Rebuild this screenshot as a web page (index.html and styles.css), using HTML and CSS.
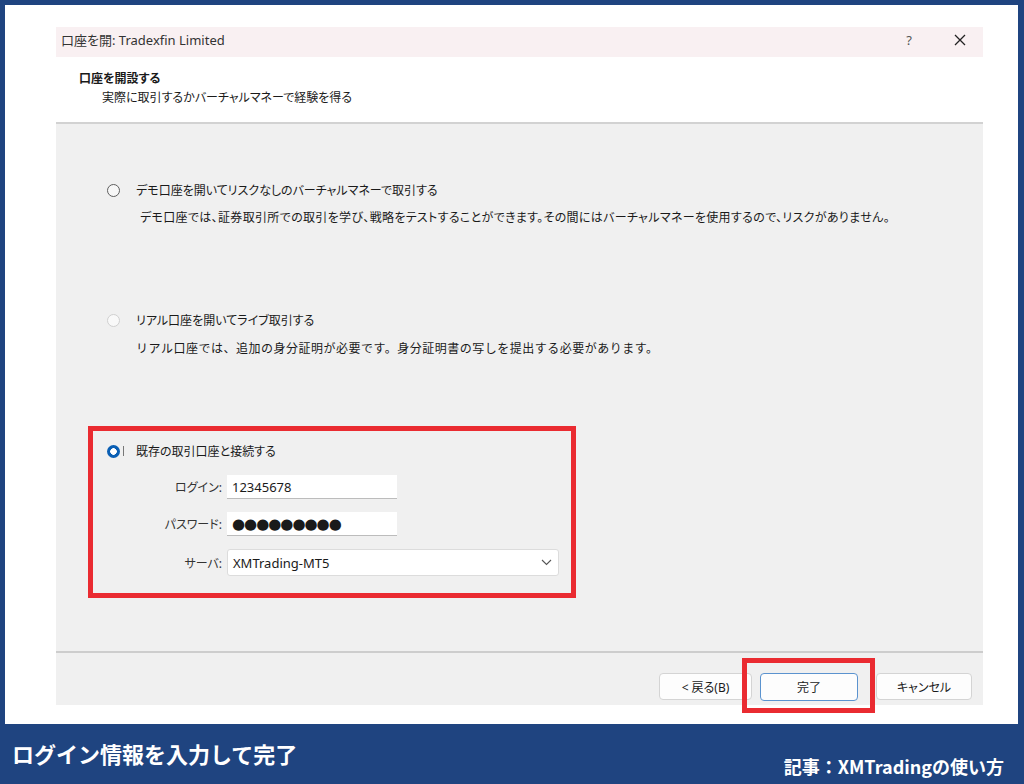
FILE: index.html
```html
<!DOCTYPE html>
<html>
<head>
<meta charset="UTF-8">
<meta name="viewport" content="width=device-width, initial-scale=1.0">
<title>口座を開</title>
<link rel="stylesheet" href="styles.css">
</head>
<body>
<div class="frame">
  <div class="dialog">
    <div class="titlebar">
      <span class="title">口座を開: Tradexfin Limited</span>
      <span class="help">?</span>
      <span class="close">
        <svg width="12" height="12" viewBox="0 0 12 12"><path d="M1 1L11 11M11 1L1 11" stroke="#222" stroke-width="1.3" fill="none"/></svg>
      </span>
    </div>
    <div class="header">
      <div class="header-title">口座を開設する</div>
      <div class="header-sub">実際に取引するかバーチャルマネーで経験を得る</div>
    </div>
    <div class="body">
      <div class="option demo">
        <div class="option-row"><span class="radio"></span><span class="label">デモ口座を開いてリスクなしのバーチャルマネーで取引する</span></div>
        <div class="desc">デモ口座では、証券取引所での取引を学び、戦略をテストすることができます。その間にはバーチャルマネーを使用するので、リスクがありません。</div>
      </div>
      <div class="option real">
        <div class="option-row"><span class="radio disabled"></span><span class="label">リアル口座を開いてライブ取引する</span></div>
        <div class="desc">リアル口座では、追加の身分証明が必要です。身分証明書の写しを提出する必要があります。</div>
      </div>
      <div class="highlight">
        <div class="option-row"><span class="radio checked"></span><span class="focus"></span><span class="label">既存の取引口座と接続する</span></div>
        <div class="fields">
          <div class="field">
            <span class="field-label">ログイン:</span>
            <span class="input">12345678</span>
          </div>
          <div class="field">
            <span class="field-label">パスワード:</span>
            <span class="input dots">●●●●●●●●●</span>
          </div>
          <div class="field">
            <span class="field-label">サーバ:</span>
            <span class="input select">XMTrading-MT5
              <svg width="11" height="7" viewBox="0 0 11 7"><path d="M1 1L5.5 5.5L10 1" stroke="#555" stroke-width="1.1" fill="none"/></svg>
            </span>
          </div>
        </div>
      </div>
    </div>
    <div class="footer">
      <span class="btn back">&lt; 戻る(B)</span>
      <span class="callout"><span class="btn primary">完了</span></span>
      <span class="btn cancel">キャンセル</span>
    </div>
  </div>
</div>
<div class="banner">
  <span class="banner-title">ログイン情報を入力して完了</span>
  <span class="banner-note">記事：XMTradingの使い方</span>
</div>
</body>
</html>
```

FILE: styles.css
```css
body {
  margin: 0;
  background: #1f4480;
  font-family: "Noto Sans", "Noto Sans CJK JP", sans-serif;
  color: #1a1a1a;
  font-feature-settings: "palt";
  width: 1024px;
  height: 784px;
  overflow: hidden;
}

.frame {
  background: #ffffff;
  margin: 5px 6px 0 5px;
  height: 719px;
  box-sizing: border-box;
  padding: 22px 0 0 51px;
}

.dialog {
  width: 927px;
  height: 678px;
  display: flex;
  flex-direction: column;
}

.titlebar {
  height: 30px;
  box-sizing: border-box;
  padding-bottom: 5px;
  background: #f9f0f2;
  display: flex;
  align-items: center;
  font-size: 13px;
  color: #333;
}

.title {
  flex: 1;
  padding-left: 5px;
}

.help {
  width: 20px;
  text-align: center;
  color: #555;
  margin-right: 35px;
}

.close {
  width: 14px;
  height: 12px;
  margin-right: 15px;
  display: flex;
}

.header {
  height: 67px;
  box-sizing: border-box;
  padding: 12px 0 0 23px;
  border-bottom: 2px solid #d2d2d2;
  font-size: 12px;
}

.header-title {
  font-weight: bold;
  line-height: 19px;
}

.header-sub {
  padding-left: 23px;
  line-height: 19px;
}

.body {
  flex: 1;
  background: #f0f0f0;
  padding: 56px 0 0 32px;
  font-size: 12px;
  border-bottom: 2px solid #cdcdcd;
}

.option {
  margin-left: 19px;
}

.option-row {
  display: flex;
  align-items: center;
  height: 20px;
}

.radio {
  width: 11px;
  height: 11px;
  border: 1px solid #5e5e5e;
  border-radius: 50%;
  background: #f7f7f7;
  margin-right: 16px;
}

.radio.disabled {
  border-color: #d0d0d0;
  background: #f9f9f9;
}

.radio.checked {
  width: 13px;
  height: 13px;
  border: none;
  background: radial-gradient(circle, #ffffff 0 3px, #0a5fb4 3.6px);
  margin-right: 3px;
}

.focus {
  width: 1px;
  height: 10px;
  background: #777;
  margin-right: 12px;
}

.desc {
  margin: 8px 0 0 33px;
  line-height: 20px;
  letter-spacing: 0.33px;
}

.real {
  margin-top: 82px;
}

.real .desc {
  margin-top: 9px;
  margin-left: 29px;
  font-feature-settings: normal;
  letter-spacing: 0.5px;
}

.highlight {
  width: 488px;
  box-sizing: border-box;
  margin-top: 67px;
  border: 5px solid #ea2b31;
  padding: 10px 0 17px 14px;
}

.fields {
  display: flex;
  flex-direction: column;
  gap: 13px;
  margin-top: 14px;
}

.field {
  display: flex;
  align-items: center;
}

.field-label {
  width: 115px;
  text-align: right;
  margin-right: 5px;
  color: #333;
}

.input {
  width: 170px;
  height: 24px;
  box-sizing: border-box;
  background: #fff;
  border-bottom: 1px solid #bcbcbc;
  padding-left: 5px;
  display: flex;
  align-items: center;
  font-size: 13px;
}

.input.dots {
  font-size: 15px;
  letter-spacing: -1px;
  font-family: "DejaVu Sans", sans-serif;
}

.input.select {
  width: 332px;
  height: 27px;
  border: 1px solid #dcdcdc;
  border-radius: 3px;
  justify-content: space-between;
  padding-right: 6px;
}

.footer {
  height: 52px;
  background: #f0f0f0;
  box-sizing: border-box;
  padding: 20px 11px 0 0;
  display: flex;
  justify-content: flex-end;
  align-items: flex-start;
  font-size: 12px;
}

.btn {
  height: 27px;
  box-sizing: border-box;
  background: #fdfdfd;
  border: 1px solid #d4d4d4;
  border-radius: 4px;
  display: flex;
  align-items: center;
  justify-content: center;
}

.back {
  width: 93px;
  margin-right: 8px;
}

.callout {
  position: relative;
  margin-right: 18px;
}

.callout::after {
  content: "";
  position: absolute;
  left: -18px;
  right: -17px;
  top: -15px;
  bottom: -12px;
  border: 5px solid #ea2b31;
}

.primary {
  width: 98px;
  height: 28px;
  border: 1px solid #5b93cf;
}

.cancel {
  width: 96px;
}

.banner {
  height: 60px;
  display: flex;
  justify-content: space-between;
  color: #fff;
  font-weight: bold;
  font-family: "Noto Sans CJK JP", sans-serif;
  font-feature-settings: normal;
}

.banner-title {
  font-size: 22px;
  padding: 13px 0 0 12px;
}

.banner-note {
  font-size: 18px;
  padding: 29px 20px 0 0;
}
```
